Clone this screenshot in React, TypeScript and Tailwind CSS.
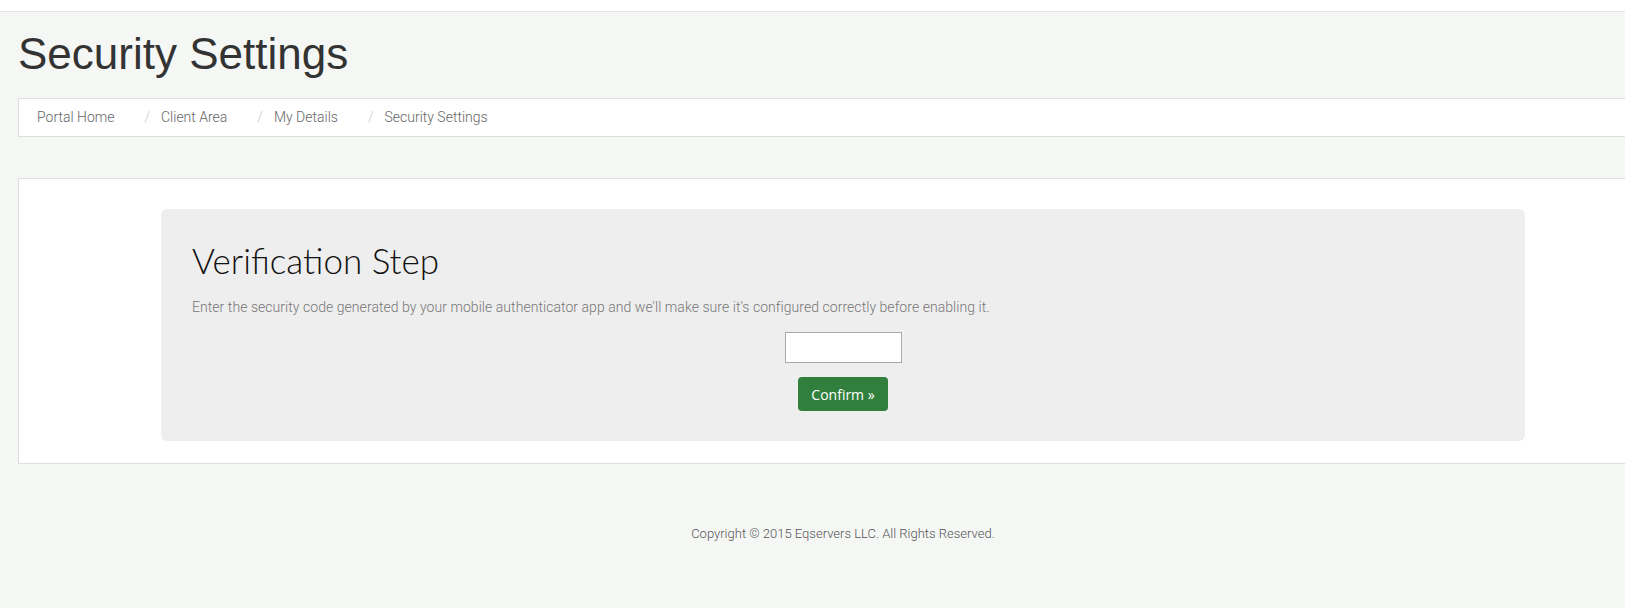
import React from "react";

export default function App() {
  const crumbs = ["Portal Home", "Client Area", "My Details", "Security Settings"];
  return (
    <div className="w-[1625px] h-[608px] overflow-hidden bg-[#f5f7f5]" style={{ fontFamily: "Roboto, 'Liberation Sans', sans-serif" }}>
      <div className="h-[12px] bg-white border-b border-[#e3e5e3]" />
      <div className="w-[1686px] px-[18px]">
        <h1 className="mt-[18px] text-[44px] leading-[48px] text-[#333]" style={{ fontFamily: "'Liberation Sans', sans-serif" }}>
          Security Settings
        </h1>
        <div className="mt-[20px] h-[39px] bg-white border border-[#dcdfdc] flex items-center pl-[18px] text-[14px] text-[#666] font-light">
          {crumbs.map((c, i) => (
            <React.Fragment key={c}>
              {i > 0 && <span className="ml-[30px] mr-[11px] text-[#c8c8c8]">/</span>}
              <span>{c}</span>
            </React.Fragment>
          ))}
        </div>
        <div className="mt-[41px] bg-white border border-[#dcdfdc] px-[142px] pt-[30px] pb-[22px]">
          <div className="bg-[#eeeeee] rounded-[6px] pl-[31px] pr-[31px] pt-[31px] pb-[30px]">
            <h2 className="text-[35px] leading-[40px] text-[#111] font-light" style={{ fontFamily: "Lato, 'Open Sans', sans-serif" }}>
              Verification Step
            </h2>
            <p className="mt-[17px] text-[14px] leading-[20px] text-[#777] font-light tracking-[0.05px]">
              Enter the security code generated by your mobile authenticator app and we'll make sure it's configured correctly before enabling it.
            </p>
            <div className="flex flex-col items-center mt-[15px]">
              <input type="text" className="w-[117px] h-[31px] bg-white border border-[#aaaaaa] outline-none" />
              <button className="mt-[14px] w-[90px] h-[34px] bg-[#317f3d] text-white rounded-[4px] text-[14px]" style={{ fontFamily: "'Open Sans', sans-serif" }}>
                Confirm »
              </button>
            </div>
          </div>
        </div>
        <div className="mt-[60px] text-center text-[13px] text-[#555] font-light">
          Copyright © 2015 Eqservers LLC. All Rights Reserved.
        </div>
      </div>
    </div>
  );
}
